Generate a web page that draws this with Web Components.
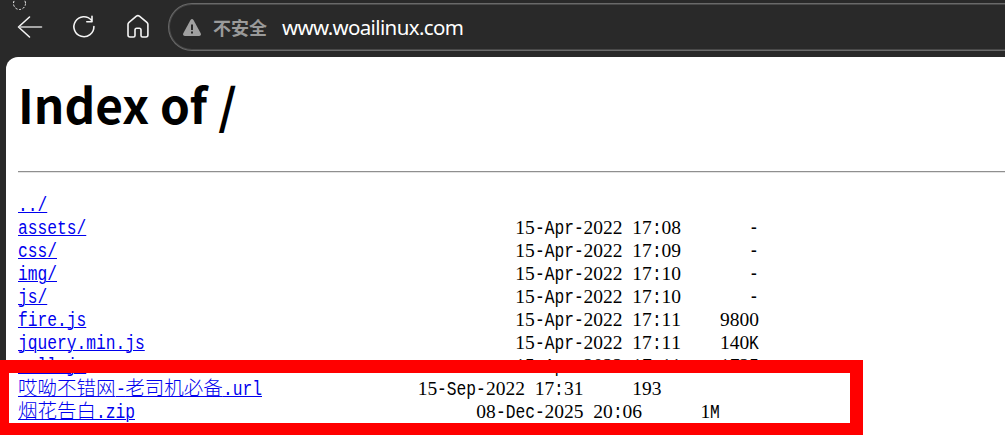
<!DOCTYPE html>
<html lang="zh-CN">
<head>
<meta charset="utf-8">
<title>Index of /</title>
<style>
    body {
        margin: 0;
        width: 1005px;
        height: 435px;
        overflow: hidden;
        background: #292929;
    }
</style>
</head>
<body>
<browser-window>
    <browser-toolbar slot="toolbar">
        <address-bar warning="不安全">www.woailinux.com</address-bar>
    </browser-toolbar>
    <index-page heading="Index of /">
        <file-row col="51" name="../"></file-row>
        <file-row col="51" name="assets/" date="15-Apr-2022 17:08" size="-"></file-row>
        <file-row col="51" name="css/" date="15-Apr-2022 17:09" size="-"></file-row>
        <file-row col="51" name="img/" date="15-Apr-2022 17:10" size="-"></file-row>
        <file-row col="51" name="js/" date="15-Apr-2022 17:10" size="-"></file-row>
        <file-row col="51" name="fire.js" date="15-Apr-2022 17:11" size="9800"></file-row>
        <file-row col="51" name="jquery.min.js" date="15-Apr-2022 17:11" size="140K"></file-row>
        <file-row col="51" name="roll.js" date="15-Apr-2022 17:11" size="1725"></file-row>
        <file-row col="41" name="哎呦不错网-老司机必备.url" date="15-Sep-2022 17:31" size="193"></file-row>
        <file-row col="47" name="烟花告白.zip" date="08-Dec-2025 20:06" size="1M"></file-row>
    </index-page>
    <mark-frame slot="mark"></mark-frame>
</browser-window>

<script>
class BrowserWindow extends HTMLElement {
    constructor() {
        super()

        this.attachShadow({ mode: 'open' });
    }
    connectedCallback() {
        this.shadowRoot.innerHTML = `
            <style>
                :host {
                    display: flex;
                    flex-direction: column;
                    position: relative;
                    height: 435px;
                    overflow: hidden;
                }
                main {
                    flex: 1;
                    min-height: 0;
                    margin-left: 6px;
                    background: white;
                    border-top-left-radius: 12px;
                }
            </style>
            <slot name="toolbar"></slot>
            <main><slot></slot></main>
            <slot name="mark"></slot>
        `;
    }
}

class BrowserToolbar extends HTMLElement {
    constructor() {
        super()

        this.attachShadow({ mode: 'open' });
    }
    connectedCallback() {
        this.shadowRoot.innerHTML = `
            <style>
                :host {
                    display: flex;
                    height: 57px;
                }
                svg {
                    flex: none;
                    width: 168px;
                    height: 57px;
                    fill: none;
                    stroke: #f4f4f4;
                    stroke-width: 1.6;
                    stroke-linecap: round;
                    stroke-linejoin: round;
                }
            </style>
            <svg viewBox="0 0 168 57">
                <circle cx="19.5" cy="3.5" r="6" stroke-width="1" stroke-linecap="butt" stroke-dasharray="2.2 1.57" />
                <path d="M29.500 17 18.500 27l11 10" />
                <path stroke="#d0d0d0" d="M19 27h22.500" />
                <path d="M91.500 20.200a10 10 0 1 0 2.400 6.300M92 16.300v5.400h-5.200" />
                <path d="M128 24.300q0-1.200 1-2l7.400-6.100q1.500-1.100 3 0l7.500 6.100q1 .8 1 2V35q0 2-2 2h-3.400q-1.500 0-1.500-1.500V30q0-1.700-1.700-1.700h-2.600q-1.700 0-1.700 1.700v5.500q0 1.500-1.500 1.500H130q-2 0-2-2z" />
            </svg>
            <slot></slot>
        `;
    }
}

class AddressBar extends HTMLElement {
    constructor() {
        super()

        this.attachShadow({ mode: 'open' });
    }
    connectedCallback() {
        this.shadowRoot.innerHTML = `
            <style>
                :host {
                    flex: 1;
                    display: flex;
                    align-items: center;
                    box-sizing: border-box;
                    height: 48px;
                    margin-top: 3px;
                    padding-left: 14px;
                    border: 1px solid #696969;
                    border-right: 0;
                    border-radius: 24px 0 0 24px;
                    box-shadow: inset 1px 0 #484848, inset 0 1px #484848, inset 0 -1px #484848;
                    color: white;
                }
                svg {
                    width: 18px;
                    height: 17px;
                }
                b {
                    margin-left: 12px;
                    width: 54px;
                    font: 700 18px/44px "Noto Sans CJK SC", sans-serif;
                    color: #9a9a9a;
                }
                span {
                    margin-left: 15px;
                    font: 400 20.5px/42px "Noto Sans", sans-serif;
                    letter-spacing: -.63px;
                    white-space: nowrap;
                }
            </style>
            <svg viewBox="0 0 18 17">
                <path fill="#a0a0a0" d="M7.500 1q1.500-1.900 3 0l7.200 13.300q.8 2.400-1.500 2.700H1.800Q-.5 16.700.3 14.300z" />
                <path fill="#292929" d="M8 5.500h2v5.500H8zM8 12.500h2v2H8z" />
            </svg>
            <b>${this.getAttribute('warning')}</b>
            <span><slot></slot></span>
        `;
    }
}

class IndexPage extends HTMLElement {
    constructor() {
        super()

        this.attachShadow({ mode: 'open' });
    }
    connectedCallback() {
        this.shadowRoot.innerHTML = `
            <style>
                :host {
                    display: block;
                    padding-left: 12px;
                }
                h1 {
                    margin: 0;
                    padding-top: 12px;
                    height: 102px;
                    font: 700 47.8px/70px "Noto Sans CJK SC", sans-serif;
                }
                hr {
                    margin: 0 0 20px;
                    border: 0;
                    border-top: 1px solid #8f8f8f;
                    border-bottom: 1px solid #e4e4e4;
                }
            </style>
            <h1>${this.getAttribute('heading')}</h1>
            <hr>
            <slot></slot>
        `;
    }
}

// one line of the listing, laid out on a grid of 9.75px character cells
const CELL = 9.75;

class FileRow extends HTMLElement {
    constructor() {
        super()

        this.attachShadow({ mode: 'open' });
    }
    getCells(text) {
        return text.match(/[\u4e00-\u9fff]+|\d+|[^\d\u4e00-\u9fff]+/g).map(part => {
            if (/[\u4e00-\u9fff]/.test(part)) {
                return `<span class="wide">${part}</span>`;
            }
            if (/\d/.test(part)) {
                return `<span>${part}</span>`;
            }
            return `<span class="narrow" style="width: ${part.length * CELL}px">${part}</span>`;
        }).join('');
    }
    connectedCallback() {
        const date = this.getAttribute('date');
        const size = this.getAttribute('size');

        this.shadowRoot.innerHTML = `
            <style>
                :host {
                    display: grid;
                    grid-template-columns: ${this.getAttribute('col') * CELL}px 165.75px 78px;
                    height: 23px;
                    font: 19.5px/23px "Liberation Serif", serif;
                    font-kerning: none;
                    white-space: pre;
                    color: black;
                }
                a {
                    justify-self: start;
                    color: #0000ee;
                }
                a span {
                    text-decoration: underline 1px;
                    text-underline-offset: 1px;
                }
                .size {
                    text-align: right;
                }
                .narrow {
                    display: inline-block;
                    font: 19.5px/23px "Liberation Mono", monospace;
                    text-align: left;
                    transform: scaleX(.8332);
                    transform-origin: 0 0;
                }
                .wide {
                    font: 300 19.5px/0 "Noto Sans CJK SC", sans-serif;
                }
            </style>
            <a>${this.getCells(this.getAttribute('name'))}</a>
            ${date ? `<div>${this.getCells(date)}</div>` : ''}
            ${size ? `<div class="size">${this.getCells(size)}</div>` : ''}
        `;
    }
}

class MarkFrame extends HTMLElement {
    constructor() {
        super()

        this.attachShadow({ mode: 'open' });
    }
    connectedCallback() {
        this.shadowRoot.innerHTML = `
            <style>
                :host {
                    position: absolute;
                    left: 0;
                    top: 360px;
                    box-sizing: border-box;
                    width: 863px;
                    height: 75px;
                    border: solid #ff0000;
                    border-width: 13px 13px 12px 9px;
                }
            </style>
        `;
    }
}

customElements.define('browser-window', BrowserWindow);
customElements.define('browser-toolbar', BrowserToolbar);
customElements.define('address-bar', AddressBar);
customElements.define('index-page', IndexPage);
customElements.define('file-row', FileRow);
customElements.define('mark-frame', MarkFrame);
</script>
</body>
</html>
